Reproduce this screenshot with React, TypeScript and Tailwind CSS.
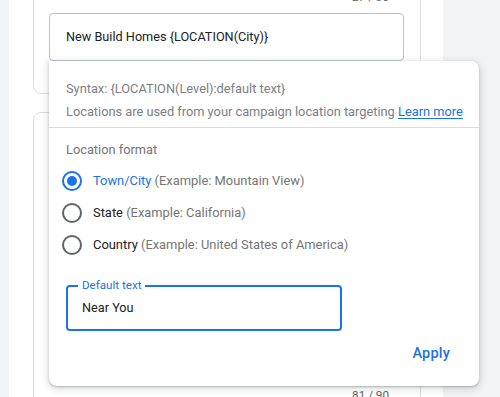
import React from "react";

function Radio({ checked }: { checked?: boolean }) {
  return (
    <span
      className={
        "flex h-[20px] w-[20px] shrink-0 items-center justify-center rounded-full border-2 " +
        (checked ? "border-[#1a73e8]" : "border-[#5f6368]")
      }
    >
      {checked ? <span className="h-[10px] w-[10px] rounded-full bg-[#1a73e8]" /> : null}
    </span>
  );
}

export default function App() {
  return (
    <div
      className="relative h-[397px] w-[500px] overflow-hidden bg-[#f1f3f4]"
      style={{ fontFamily: "Roboto, 'Noto Sans', sans-serif" }}
    >
      <div className="ml-[9px] flex h-full w-[434px] flex-col bg-white pl-[24px]">
        {/* card 1 */}
        <div className="mt-[-30px] w-[388px] rounded-[8px] border border-[#dadce0] px-[15px] pb-[32px] pt-[18px]">
          <div className="pr-[16px] text-right text-[11.7px] leading-[16px] text-[#5f6368]">27 / 30</div>
          <div className="mt-[8px] flex h-[48px] w-[355px] items-center rounded-[4px] border border-[#bdc1c6] px-[16px] text-[12.7px] text-[#202124]">
            New Build Homes {"{LOCATION(City)}"}
          </div>
        </div>
        {/* card 2 */}
        <div className="mt-[18px] w-[388px] flex-1 rounded-t-[8px] border border-[#dadce0] px-[15px] pt-[274px]">
          <div className="pr-[16px] text-right text-[11.7px] leading-[16px] text-[#5f6368]">81 / 90</div>
        </div>
      </div>

      {/* popup */}
      <div className="absolute left-[49px] top-[61px] h-[325px] w-[430px] rounded-b-[8px] rounded-tr-[8px] bg-white shadow-[0_2px_6px_2px_rgba(60,64,67,0.15),0_1px_2px_0_rgba(60,64,67,0.3)]">
        <div className="px-[17px] pb-[4px] pt-[16px] text-[12.8px] leading-[23px] text-[#7b7f84]">
          <div className="whitespace-nowrap">Syntax: {"{LOCATION(Level):default text}"}</div>
          <div className="whitespace-nowrap">
            Locations are used from your campaign location targeting{" "}
            <span className="text-[#1a73e8] underline underline-offset-2">Learn more</span>
          </div>
        </div>
        <div className="h-px w-full bg-[#dadce0]" />
        <div className="px-[13px]">
          <div className="mt-[12px] px-[4px] text-[12.8px] leading-[20px] text-[#757575]">Location format</div>
          <div className="mt-[5px] flex flex-col">
            <div className="flex h-[32px] items-center gap-[11px] text-[12.9px]">
              <Radio checked />
              <span>
                <span className="text-[#1a73e8]">Town/City</span>{" "}
                <span className="text-[#757575]">(Example: Mountain View)</span>
              </span>
            </div>
            <div className="flex h-[32px] items-center gap-[11px] text-[12.9px]">
              <Radio />
              <span>
                <span className="text-[#202124]">State</span>{" "}
                <span className="text-[#757575]">(Example: California)</span>
              </span>
            </div>
            <div className="flex h-[32px] items-center gap-[11px] text-[12.9px]">
              <Radio />
              <span>
                <span className="text-[#202124]">Country</span>{" "}
                <span className="text-[#757575]">(Example: United States of America)</span>
              </span>
            </div>
          </div>
        </div>
        <div className="relative ml-[17px] mt-[24px] flex h-[46px] w-[276px] items-center rounded-[4px] border-2 border-[#1a73e8] px-[14px] text-[12.7px] text-[#202124]">
          <span className="absolute left-[10px] top-[-9px] bg-white px-[4px] text-[11.6px] leading-[14px] text-[#1a73e8]">
            Default text
          </span>
          Near You
        </div>
        <div className="mt-[12px] flex justify-end pr-[29px]">
          <span className="text-[14.5px] font-medium leading-[22px] tracking-[0.2px] text-[#1a73e8]">Apply</span>
        </div>
      </div>
    </div>
  );
}
